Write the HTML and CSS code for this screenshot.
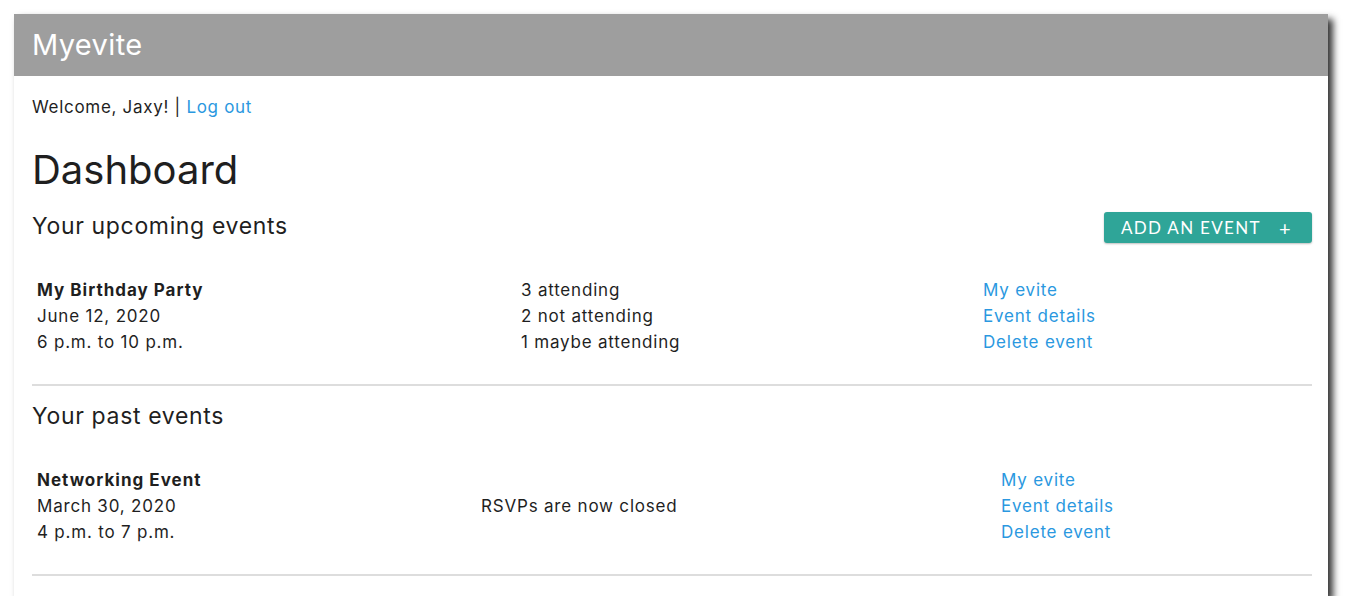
FILE: index.html
```html
<!DOCTYPE html>
<html>
<head>
<meta charset="utf-8">
<link rel="stylesheet" href="styles.css">
</head>
<body>
<div class="window">
  <header class="topbar"><span class="brand">Myevite</span></header>
  <main class="content">
    <p class="welcome">Welcome, Jaxy! | <a href="#" class="link">Log out</a></p>
    <h1 class="title">Dashboard</h1>

    <section class="section">
      <div class="section-head">
        <h2 class="section-title">Your upcoming events</h2>
        <button class="add-btn"><span>ADD AN EVENT</span><span class="plus">+</span></button>
      </div>
      <div class="event event-upcoming">
        <div class="col">
          <div class="event-name">My Birthday Party</div>
          <div>June 12, 2020</div>
          <div>6 p.m. to 10 p.m.</div>
        </div>
        <div class="col">
          <div>3 attending</div>
          <div>2 not attending</div>
          <div>1 maybe attending</div>
        </div>
        <div class="col">
          <a href="#" class="link">My evite</a>
          <a href="#" class="link">Event details</a>
          <a href="#" class="link">Delete event</a>
        </div>
      </div>
    </section>

    <section class="section">
      <div class="section-head">
        <h2 class="section-title">Your past events</h2>
      </div>
      <div class="event event-past">
        <div class="col">
          <div class="event-name">Networking Event</div>
          <div>March 30, 2020</div>
          <div>4 p.m. to 7 p.m.</div>
        </div>
        <div class="col col-mid">
          <div>RSVPs are now closed</div>
        </div>
        <div class="col">
          <a href="#" class="link">My evite</a>
          <a href="#" class="link">Event details</a>
          <a href="#" class="link">Delete event</a>
        </div>
      </div>
    </section>
  </main>
</div>
</body>
</html>
```

FILE: styles.css
```css
html, body {
  margin: 0;
  padding: 0;
  background: #ffffff;
}
body {
  font-family: Inter, "Noto Sans", sans-serif;
  color: #1f1f1f;
  padding: 14px 0 0 14px;
}
.window {
  width: 1314px;
  height: 582px;
  background: #ffffff;
  box-shadow: 5px 5px 7px rgba(0, 0, 0, 0.8);
  overflow: hidden;
}
.topbar {
  height: 62px;
  background: #9e9e9e;
  display: flex;
  align-items: center;
  padding-left: 18px;
}
.brand {
  color: #ffffff;
  font-size: 29px;
  letter-spacing: 0.4px;
  line-height: 62px;
}
.content {
  padding: 0 16px 0 18px;
}
.welcome {
  margin: 19px 0 0;
  font-size: 17px;
  letter-spacing: 0.7px;
  line-height: 24px;
}
.link {
  color: #2a98e0;
  text-decoration: none;
}
.title {
  margin: 27px 0 0;
  font-size: 40px;
  line-height: 48px;
  font-weight: 400;
}
.section {
  border-bottom: 2px solid #dddddd;
  padding-bottom: 29px;
}
.section + .section {
  margin-top: 14px;
}
.section:first-of-type {
  margin-top: 16px;
}
.section-head {
  height: 30px;
  display: flex;
  align-items: flex-start;
  justify-content: space-between;
}
.section-title {
  margin: 0;
  font-size: 23px;
  letter-spacing: 0.65px;
  line-height: 32px;
  font-weight: 400;
}
.add-btn {
  margin-top: 2px;
  height: 31px;
  width: 208px;
  background: #2fa598;
  border: none;
  border-radius: 3px;
  box-shadow: 0 1px 2px rgba(0, 0, 0, 0.25);
  color: #ffffff;
  font-family: Lato, "Open Sans", sans-serif;
  font-size: 17px;
  letter-spacing: 1.3px;
  display: flex;
  align-items: center;
  padding: 0 20px 0 17px;
  justify-content: space-between;
}
.plus {
  font-size: 20px;
  font-weight: 400;
}
.event {
  margin-top: 37px;
  padding-left: 5px;
  display: grid;
  font-size: 17px;
  letter-spacing: 0.8px;
  line-height: 26px;
}
.event-upcoming {
  grid-template-columns: 484px 462px 1fr;
}
.event-past {
  grid-template-columns: 444px 520px 1fr;
}
.col {
  display: flex;
  flex-direction: column;
}
.col-mid {
  justify-content: center;
}
.event-name {
  font-weight: 700;
  letter-spacing: 1px;
}
```
